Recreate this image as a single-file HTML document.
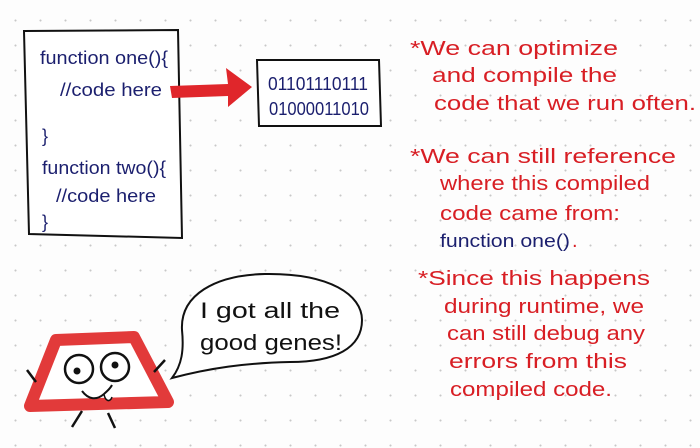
<!DOCTYPE html>
<html><head><meta charset="utf-8"><style>
html,body{margin:0;padding:0;background:#fff;}
body{width:700px;height:448px;overflow:hidden;background-color:#fdfdfd;
background-image:radial-gradient(circle,#c8c8c8 0.8px,transparent 1.2px);background-size:25px 25px;background-position:3px 8px;}
svg{position:absolute;left:0;top:0;}
text{font-family:"Liberation Sans",sans-serif;}
.r{fill:#d81e24;font-size:20px;}
.b{fill:#1b1f6e;font-size:18px;}
</style></head><body>
<svg width="700" height="448" viewBox="0 0 700 448">
<path d="M24 31 L178 30 L182 238 L29 234 Z" fill="#fff" stroke="#111" stroke-width="2"/>
<text class="b" x="40" y="64" textLength="128" lengthAdjust="spacingAndGlyphs">function one(){</text>
<text class="b" x="60" y="96" textLength="102" lengthAdjust="spacingAndGlyphs">//code here</text>
<text class="b" x="42" y="142">}</text>
<text class="b" x="42" y="174" textLength="124" lengthAdjust="spacingAndGlyphs">function two(){</text>
<text class="b" x="56" y="202" textLength="100" lengthAdjust="spacingAndGlyphs">//code here</text>
<text class="b" x="42" y="228">}</text>
<path d="M170 86 L228 84 L226 68 L252 87 L228 107 L228 96 L172 98 Z" fill="#e0262b"/>
<path d="M257 60 L379 60 L381 126 L259 126 Z" fill="#fff" stroke="#111" stroke-width="2"/>
<text class="b" x="268" y="90" textLength="100" lengthAdjust="spacingAndGlyphs">01101110111</text>
<text class="b" x="269" y="115" textLength="100" lengthAdjust="spacingAndGlyphs">01000011010</text>
<text class="r" x="410" y="55" textLength="208" lengthAdjust="spacingAndGlyphs">*We can optimize</text>
<text class="r" x="432" y="82" textLength="185" lengthAdjust="spacingAndGlyphs">and compile the</text>
<text class="r" x="434" y="110" textLength="262" lengthAdjust="spacingAndGlyphs">code that we run often.</text>
<text class="r" x="410" y="163" textLength="266" lengthAdjust="spacingAndGlyphs">*We can still reference</text>
<text class="r" x="440" y="190" textLength="210" lengthAdjust="spacingAndGlyphs">where this compiled</text>
<text class="r" x="440" y="220" textLength="180" lengthAdjust="spacingAndGlyphs">code came from:</text>
<text class="b" x="440" y="247" textLength="130" lengthAdjust="spacingAndGlyphs">function one()</text>
<text class="r" x="572" y="247">.</text>
<text class="r" x="418" y="285" textLength="232" lengthAdjust="spacingAndGlyphs">*Since this happens</text>
<text class="r" x="444" y="313" textLength="200" lengthAdjust="spacingAndGlyphs">during runtime, we</text>
<text class="r" x="447" y="340" textLength="198" lengthAdjust="spacingAndGlyphs">can still debug any</text>
<text class="r" x="449" y="368" textLength="178" lengthAdjust="spacingAndGlyphs">errors from this</text>
<text class="r" x="450" y="396" textLength="162" lengthAdjust="spacingAndGlyphs">compiled code.</text>
<path d="M172 378 C182 365 184 350 182 330 C180 295 215 275 265 274 C330 273 362 295 362 320 C362 348 335 362 290 362 C245 363 210 368 172 378 Z" fill="#fff" stroke="#111" stroke-width="2"/>
<text x="200" y="318" style="font-size:22px;fill:#111" textLength="140" lengthAdjust="spacingAndGlyphs">I got all the</text>
<text x="200" y="350" style="font-size:22px;fill:#111" textLength="142" lengthAdjust="spacingAndGlyphs">good genes!</text>
<path d="M56 340 L134 337 L168 402 L30 406 Z" fill="#fff" stroke="#e23a3a" stroke-width="12" stroke-linejoin="round"/>
<circle cx="79" cy="369" r="14" fill="#fff" stroke="#111" stroke-width="2.5"/>
<circle cx="77" cy="371" r="3.5" fill="#111"/>
<circle cx="115" cy="367" r="14" fill="#fff" stroke="#111" stroke-width="2.5"/>
<circle cx="115" cy="365" r="3.5" fill="#111"/>
<path d="M82 391 C88 399 96 401 104 394 C108 390 110 389 112 385" fill="none" stroke="#111" stroke-width="2"/>
<path d="M104 394 C105 401 110 403 112 397" fill="#fff" stroke="#111" stroke-width="1.5"/>
<path d="M27 370 L36 382" stroke="#111" stroke-width="2.5"/>
<path d="M165 360 L154 372" stroke="#111" stroke-width="2.5"/>
<path d="M82 411 L72 427" stroke="#111" stroke-width="2.5"/>
<path d="M108 413 L115 428" stroke="#111" stroke-width="2.5"/>
</svg>
</body></html>
